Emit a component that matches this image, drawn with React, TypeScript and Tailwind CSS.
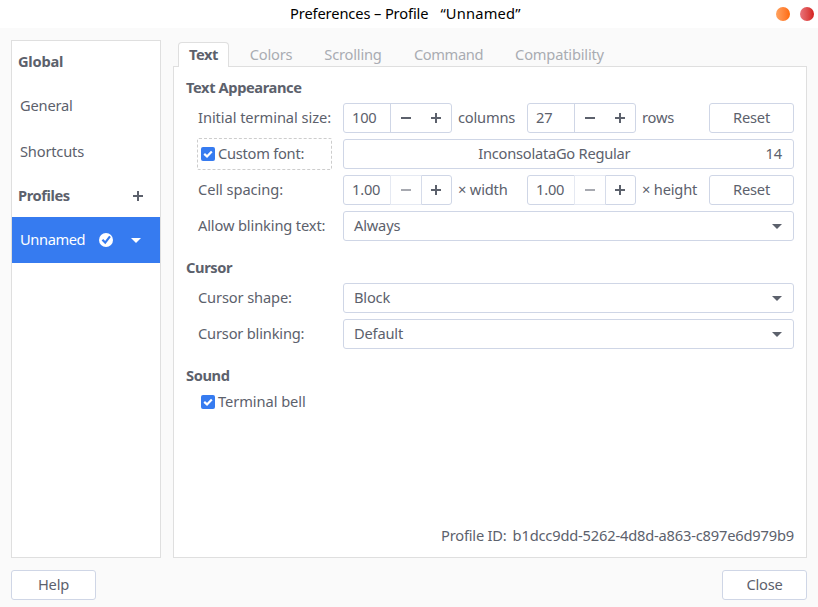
import React from "react";

function T({ children, className = "tracking-[-0.19px]" }: { children: React.ReactNode; className?: string }) {
  return <span className={`block pb-0.5 whitespace-pre ${className}`}>{children}</span>;
}

function Minus({ muted = false }: { muted?: boolean }) {
  return (
    <svg width="10" height="10" viewBox="0 0 10 10" shapeRendering="crispEdges" className={muted ? "text-[#a7a9b0]" : "text-[#5c616c]"}>
      <path d="M0 4h10v2H0z" fill="currentColor" />
    </svg>
  );
}

function Plus() {
  return (
    <svg width="10" height="10" viewBox="0 0 10 10" shapeRendering="crispEdges" className="text-[#5c616c]">
      <path d="M0 4h4V0h2v4h4v2H6v4H4V6H0z" fill="currentColor" />
    </svg>
  );
}

function Arrow() {
  return (
    <svg width="10" height="5" viewBox="0 0 10 5">
      <path d="M0 0h10L5 5z" fill="currentColor" />
    </svg>
  );
}

function Button({ children }: { children: React.ReactNode }) {
  return (
    <button className="flex h-[30px] w-[85px] shrink-0 items-center justify-center rounded-[3px] border border-[#cfd6e6] bg-white">
      <T>{children}</T>
    </button>
  );
}

function Spin({ value, atMin = false }: { value: string; atMin?: boolean }) {
  return (
    <div className="flex h-[30px] w-[109px] shrink-0 rounded-[3px] border border-[#cfd6e6] bg-white">
      <div className="flex w-[46px] items-center pl-2">
        <T className="tracking-[-0.2px]">{value}</T>
      </div>
      <div
        className={
          atMin
            ? "-my-px flex w-8 items-center border border-[#e5e9f2] border-r-[#d6dcea] pl-[10px]"
            : "flex w-8 items-center border-l border-[#cfd6e6] pl-[10px]"
        }
      >
        <Minus muted={atMin} />
      </div>
      <div className="flex flex-1 items-center pl-[9px]">
        <Plus />
      </div>
    </div>
  );
}

function Row({ label, children }: { label: React.ReactNode; children: React.ReactNode }) {
  return (
    <div className="flex h-[30px] items-center pl-6">
      <div className="w-[145px] shrink-0">{label}</div>
      {children}
    </div>
  );
}

function Select({ value }: { value: string }) {
  return (
    <div className="flex h-[30px] w-[451px] items-center justify-between rounded-[3px] border border-[#cfd6e6] bg-white pr-[11px] pl-2.5">
      <T>{value}</T>
      <Arrow />
    </div>
  );
}

function Check({ children }: { children: React.ReactNode }) {
  return (
    <span className="flex items-center gap-[3px]">
      <span className="flex size-3.5 items-center justify-center rounded-[2px] bg-[#367bf0]">
        <svg width="14" height="14" viewBox="0 0 14 14">
          <path d="M3.2 6.9 6 9.4 10.8 4.4" fill="none" stroke="#fff" strokeWidth="2.2" />
        </svg>
      </span>
      {children}
    </span>
  );
}

function Heading({ children }: { children: React.ReactNode }) {
  return (
    <h2 className="flex h-5 items-center pl-3 font-bold">
      <T className="tracking-[-0.4px]">{children}</T>
    </h2>
  );
}

export default function App() {
  return (
    <div className="flex h-[607px] w-[818px] flex-col bg-[#fafafa] font-['Noto_Sans',sans-serif] text-[14.67px] leading-5 text-[#5c616c]">
      <header className="flex h-7 shrink-0 items-center bg-white pr-1 pl-[290px] text-black">
        <T className="tracking-[-0.12px]">Preferences – Profile</T>
        <T className="ml-3 tracking-[0.2px]">“Unnamed”</T>
        <div className="ml-auto flex gap-2.5">
          <span className="size-3.5 rounded-full bg-linear-to-r from-[#ffa25e] to-[#ff6a00]" />
          <span className="size-3.5 rounded-full bg-linear-to-r from-[#e8737b] to-[#d41919]" />
        </div>
      </header>

      <main className="flex h-[530px] shrink-0 gap-3 pl-[11px]">
        <aside className="mt-3 h-[518px] w-[150px] border border-[#dfdfdf] bg-white">
          <div className="flex h-[42px] items-center pl-1.5 font-bold">
            <T className="tracking-[-0.25px]">Global</T>
          </div>
          <div className="flex h-[46px] items-center pl-2">
            <T>General</T>
          </div>
          <div className="flex h-[46px] items-center pl-2">
            <T>Shortcuts</T>
          </div>
          <div className="flex h-[42px] items-center justify-between pr-[17px] pl-1.5">
            <span className="font-bold">
              <T className="tracking-[-0.42px]">Profiles</T>
            </span>
            <Plus />
          </div>
          <div className="flex h-[46px] items-center bg-[#367bf0] pl-2 text-white">
            <div className="w-[79px]">
              <T className="tracking-[-0.4px]">Unnamed</T>
            </div>
            <svg width="14" height="14" viewBox="0 0 14 14">
              <circle cx="7" cy="7" r="7" fill="#fff" />
              <path d="M3.4 6.8 6.2 9.6 11 3.4" fill="none" stroke="#367bf0" strokeWidth="2.2" />
            </svg>
            <span className="ml-[18px]">
              <Arrow />
            </span>
          </div>
        </aside>

        <section className="flex w-[634px] flex-col pt-3.5">
          <nav className="z-10 -mb-px flex h-[25px] shrink-0 pl-[5px] text-[#a9acb2]">
            <span className="flex w-[51px] items-center justify-center rounded-t-[4px] border border-b-0 border-[#dfdfdf] bg-white font-bold text-[#5c616c]">
              <T className="tracking-[-0.42px]">Text</T>
            </span>
            <span className="flex w-[84px] items-center justify-center">
              <T>Colors</T>
            </span>
            <span className="flex w-[80px] items-center justify-center">
              <T>Scrolling</T>
            </span>
            <span className="flex w-[111px] items-center justify-center">
              <T className="tracking-[-0.4px]">Command</T>
            </span>
            <span className="flex w-[111px] items-center justify-center">
              <T>Compatibility</T>
            </span>
          </nav>
          <div className="flex flex-1 flex-col border border-[#dfdfdf] bg-white pt-[11px]">
            <Heading>Text Appearance</Heading>
            <div className="mt-[5px] flex flex-col gap-1.5">
              <Row label={<T className="tracking-[-0.07px]">Initial terminal size:</T>}>
                <Spin value="100" />
                <div className="w-[75px] pl-1.5">
                  <T>columns</T>
                </div>
                <Spin value="27" />
                <div className="w-[73px] pl-1.5">
                  <T>rows</T>
                </div>
                <Button>Reset</Button>
              </Row>
              <Row
                label={
                  <div className="-ml-px flex h-8 w-[135px] items-center rounded-[2px] border border-dashed border-[#cdcdcd] pl-[3px]">
                    <Check>
                      <T className="tracking-[-0.26px]">Custom font:</T>
                    </Check>
                  </div>
                }
              >
                <div className="flex h-[30px] w-[451px] items-center rounded-[3px] border border-[#cfd6e6] bg-white pr-[11px]">
                  <div className="flex-1 pr-px text-center">
                    <T className="tracking-[-0.25px]">InconsolataGo Regular</T>
                  </div>
                  <T>14</T>
                </div>
              </Row>
              <Row label={<T className="tracking-[-0.07px]">Cell spacing:</T>}>
                <Spin value="1.00" atMin />
                <div className="w-[75px] pl-1.5">
                  <T>× width</T>
                </div>
                <Spin value="1.00" atMin />
                <div className="w-[73px] pl-1.5">
                  <T>× height</T>
                </div>
                <Button>Reset</Button>
              </Row>
              <Row label={<T className="tracking-[-0.14px]">Allow blinking text:</T>}>
                <Select value="Always" />
              </Row>
            </div>
            <div className="h-[17px]" />
            <Heading>Cursor</Heading>
            <div className="mt-[5px] flex flex-col gap-1.5">
              <Row label={<T className="tracking-[-0.14px]">Cursor shape:</T>}>
                <Select value="Block" />
              </Row>
              <Row label={<T>Cursor blinking:</T>}>
                <Select value="Default" />
              </Row>
            </div>
            <div className="h-[17px]" />
            <Heading>Sound</Heading>
            <div className="mt-px flex h-[30px] items-center pl-[27px]">
              <Check>
                <T className="tracking-[-0.07px]">Terminal bell</T>
              </Check>
            </div>
            <div className="mt-auto flex justify-end gap-1.5 pr-3 pb-2.5">
              <T className="tracking-[-0.2px]">Profile ID:</T>
              <T className="tracking-[-0.18px]">b1dcc9dd-5262-4d8d-a863-c897e6d979b9</T>
            </div>
          </div>
        </section>
      </main>

      <footer className="flex justify-between pt-3 pr-[11px] pl-[11px]">
        <Button>Help</Button>
        <Button>Close</Button>
      </footer>
    </div>
  );
}
